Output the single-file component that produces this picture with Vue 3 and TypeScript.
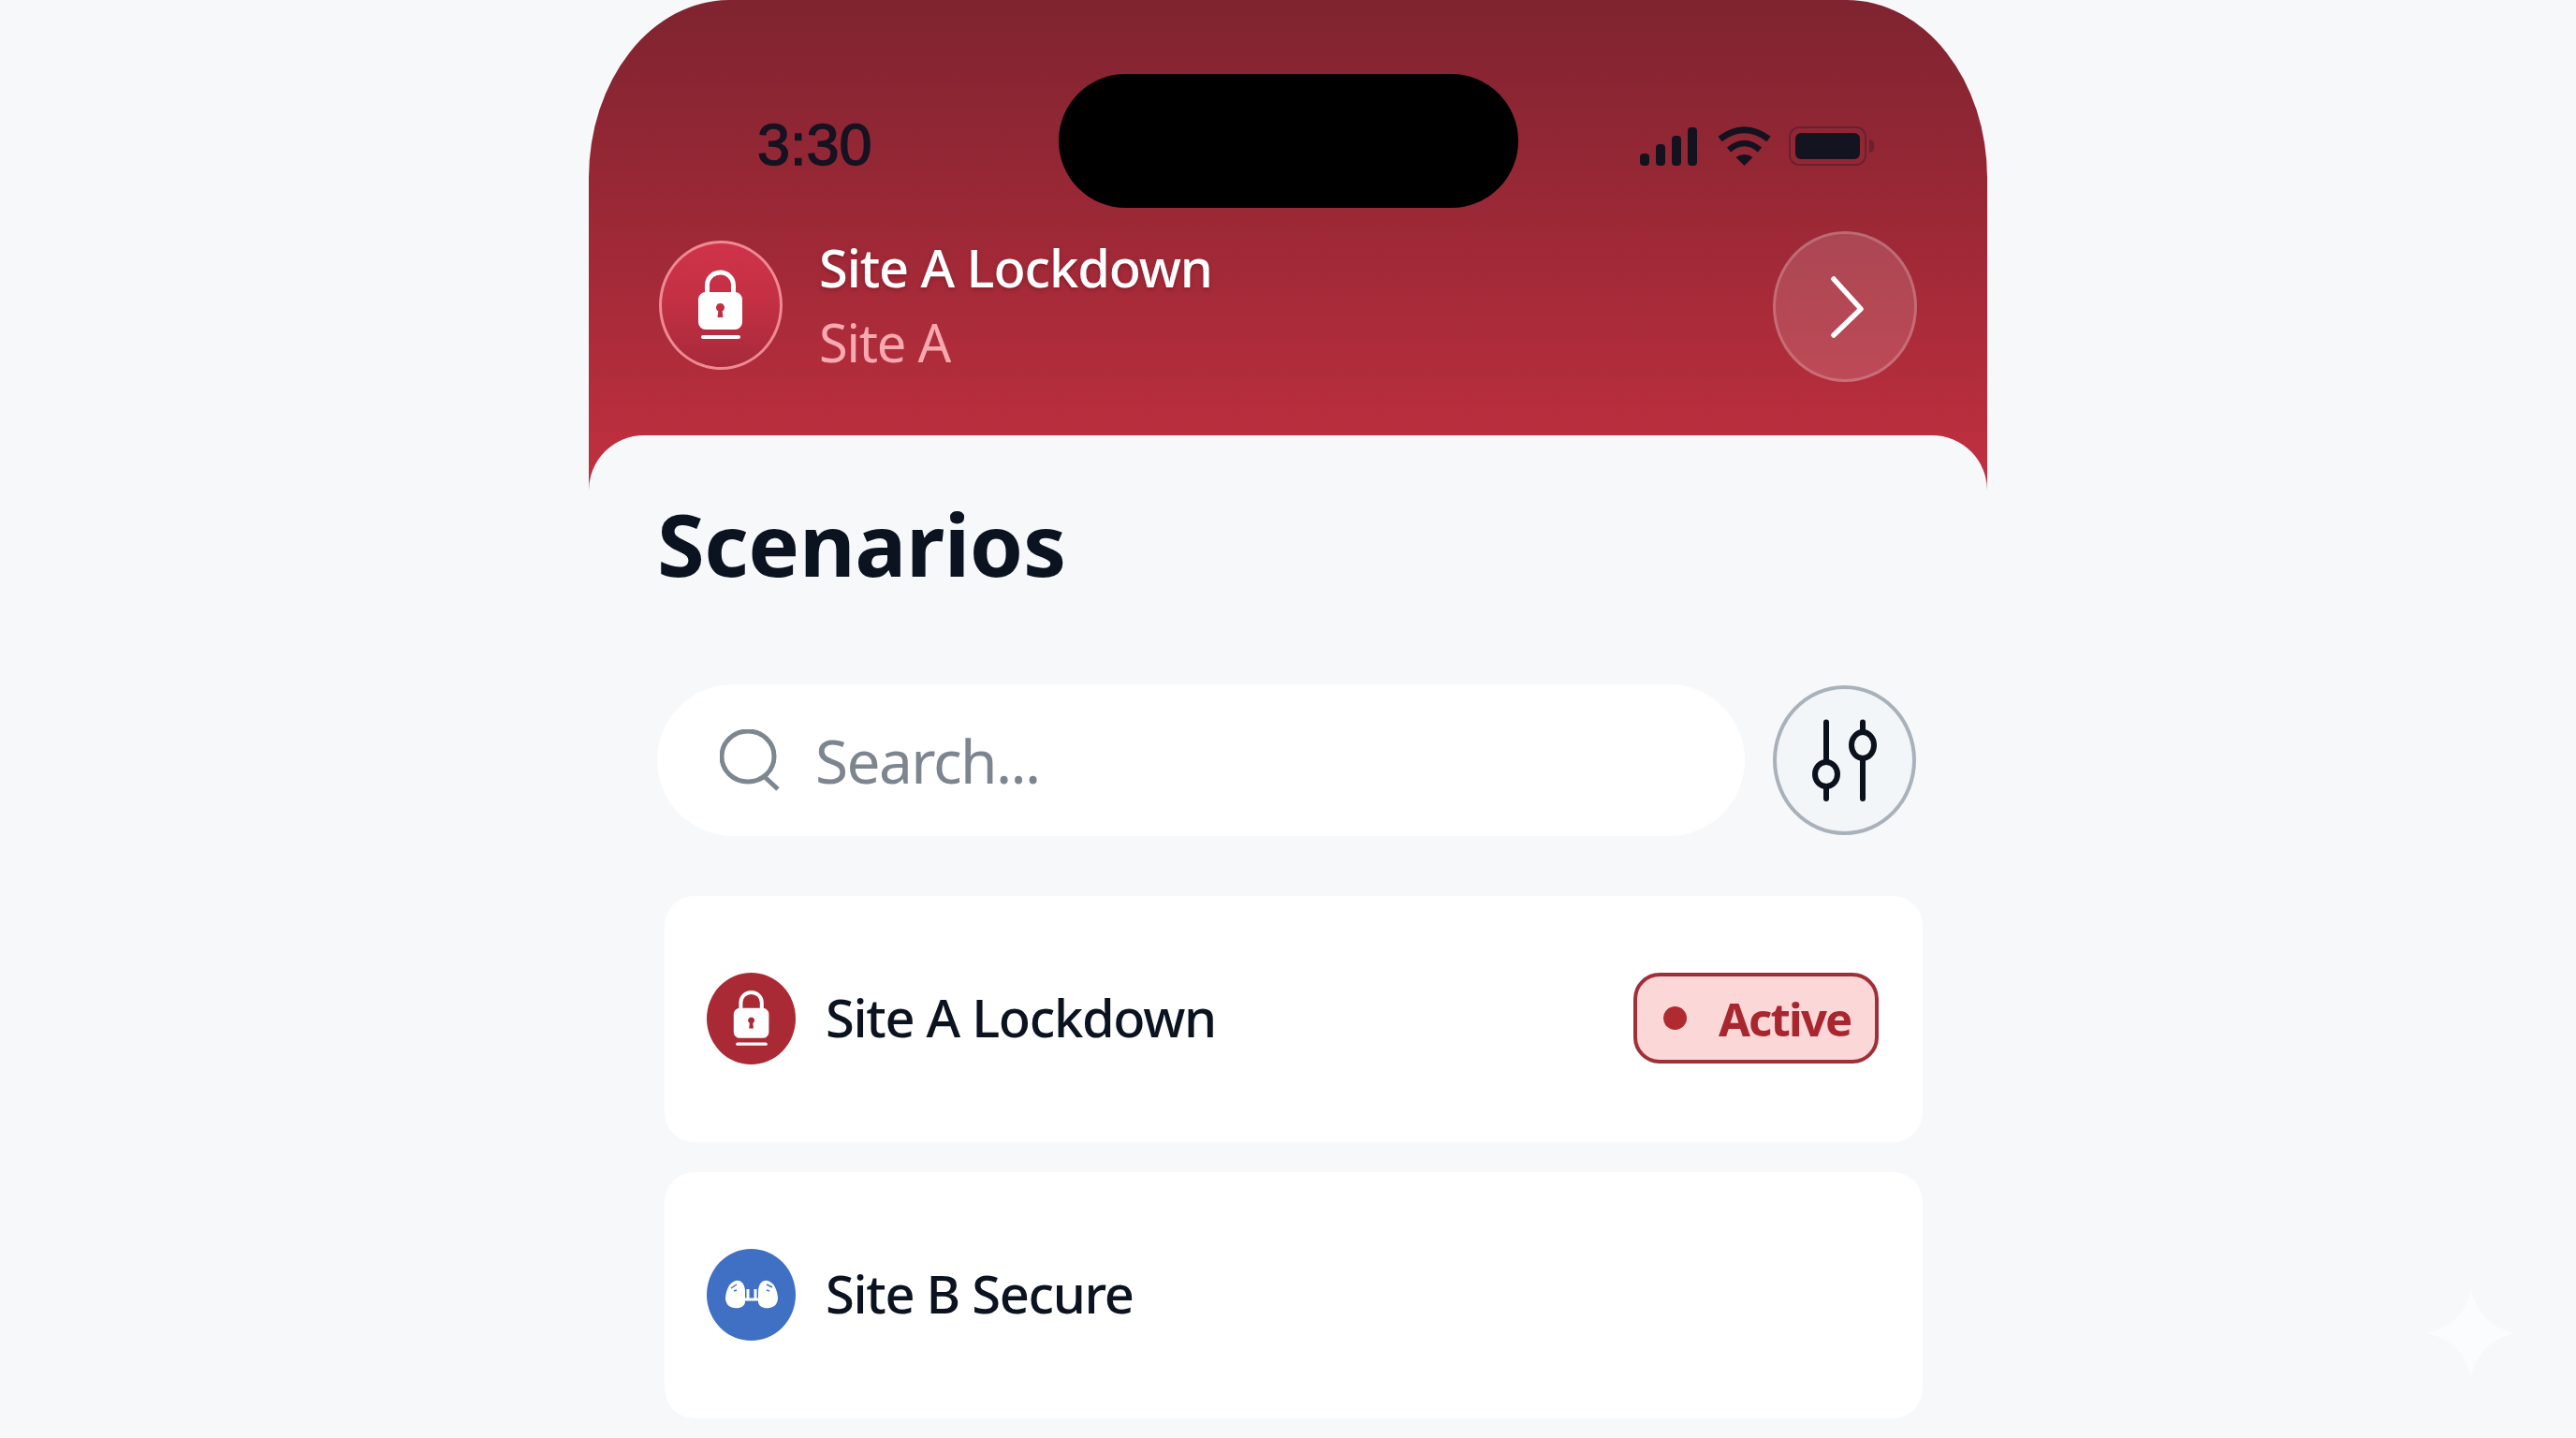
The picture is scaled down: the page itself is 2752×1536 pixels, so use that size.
<script setup lang="ts">
interface Scenario {
  name: string
  icon: 'lock' | 'binoculars'
  active: boolean
}

const scenarios: Scenario[] = [
  { name: 'Site A Lockdown', icon: 'lock', active: true },
  { name: 'Site B Secure', icon: 'binoculars', active: false }
]

const signalBars = [13, 23, 32, 41]
</script>

<template>
  <main class="page">
    <svg class="defs" aria-hidden="true">
      <symbol id="lock" viewBox="0 0 60 80">
        <path d="M15.5 28V18.5a14 13.5 0 0 1 28 0V28" fill="none" stroke="#fff" stroke-width="5" />
        <path
          fill="#fff"
          fill-rule="evenodd"
          d="M14 26h31a8 8 0 0 1 8 8v24a8 8 0 0 1-8 8H14a8 8 0 0 1-8-8V34a8 8 0 0 1 8-8ZM29.5 38a4.5 4.5 0 0 0-2.2 8.4L26.500 53h6l-.8-6.600A4.500 4.500 0 0 0 29.500 38Z"
        />
        <rect x="9" y="72" width="42" height="4" rx="2" fill="#fff" />
      </symbol>
    </svg>

    <div class="phone">
      <header class="hero">
        <div class="status-bar">
          <span class="time">3:30</span>
          <div class="island"></div>
          <div class="status-icons">
            <div class="signal">
              <span v-for="h in signalBars" :key="h" :style="{ height: h + 'px' }"></span>
            </div>
            <svg class="wifi" viewBox="0 0 59 42">
              <path d="M3.500 13.500Q29.500-6 55.500 13.500" fill="none" stroke="#14121f" stroke-width="7" />
              <path d="M13 25Q29.500 11 46 25" fill="none" stroke="#14121f" stroke-width="6.500" />
              <path d="M20.500 33Q29.500 27 38.500 33L29.500 42Z" fill="#14121f" />
            </svg>
            <div class="battery"><span></span></div>
            <div class="battery-nub"></div>
          </div>
        </div>

        <div class="alert-row">
          <div class="alert-icon">
            <svg class="lock-lg"><use href="#lock" /></svg>
          </div>
          <div class="alert-text">
            <div class="alert-title">Site A Lockdown</div>
            <div class="alert-sub">Site A</div>
          </div>
          <button class="alert-go" type="button">
            <svg viewBox="0 0 36 66">
              <path d="M3 3 32 35 3 63" fill="none" stroke="#fff" stroke-width="5.500" stroke-linecap="round" stroke-linejoin="round" />
            </svg>
          </button>
        </div>
      </header>

      <section class="sheet">
        <h1 class="title">Scenarios</h1>

        <div class="tools">
          <div class="search">
            <svg class="search-icon" viewBox="0 0 64 66">
              <ellipse cx="30" cy="29" rx="28" ry="27" fill="none" stroke="#7d8790" stroke-width="5" />
              <path d="M47 50 62 64" fill="none" stroke="#7d8790" stroke-width="5" />
            </svg>
            <span class="search-text">Search...</span>
          </div>
          <button class="filter" type="button">
            <svg viewBox="0 0 72 92">
              <g fill="none" stroke="#0b121d" stroke-width="6" stroke-linecap="round">
                <path d="M16 5.500V47M16 75V87" />
                <path d="M55 5.500V16M55 44V87" />
                <ellipse cx="16" cy="61" rx="12" ry="13" />
                <ellipse cx="55" cy="30" rx="12" ry="14" />
              </g>
            </svg>
          </button>
        </div>

        <ul class="cards">
          <li v-for="s in scenarios" :key="s.name" class="card">
            <div class="card-icon" :class="s.icon">
              <svg v-if="s.icon === 'lock'" class="lock-sm"><use href="#lock" /></svg>
              <svg v-else class="binoculars" viewBox="0 0 56 31">
                <path fill="#fff" d="M11 1C17 0 21 5 21 13V24C20 29 15 31 9 30 3 29 0 25 0 19 1 10 4 3 11 1Z" />
                <path fill="#fff" d="M45 1C39 0 35 5 35 13V24C36 29 41 31 47 30 53 29 56 25 56 19 55 10 52 3 45 1Z" />
                <path fill="none" stroke="#fff" stroke-width="3" d="M20 21H36M24 10V21M32 10V21" />
                <path fill="none" stroke="#3f70c4" stroke-width="1.500" d="M6 9 12 5M9 12 12 11M44 5 50 8M44 11 47 12" />
              </svg>
            </div>
            <span class="card-name">{{ s.name }}</span>
            <span v-if="s.active" class="badge"><i class="badge-dot"></i>Active</span>
          </li>
        </ul>
      </section>
    </div>

    <svg class="sparkle" viewBox="0 0 96 96">
      <path d="M48 0C53 26 70 43 96 48 70 53 53 70 48 96 43 70 26 53 0 48 26 43 43 26 48 0Z" fill="#fbfcfd" />
    </svg>
  </main>
</template>

<style scoped>
.page {
  position: relative;
  height: 1536px;
  overflow: hidden;
  background: #f6f8fa;
  font-family: "Noto Sans", "Open Sans", sans-serif;
}

.defs {
  position: absolute;
  width: 0;
  height: 0;
}

.phone {
  width: 1494px;
  margin: 0 auto;
}

/* red top part */
.hero {
  height: 524px;
  box-sizing: border-box;
  padding-top: 79px;
  border-radius: 150px 150px 0 0 / 190px 190px 0 0;
  background: linear-gradient(180deg, #7f2430 0%, #9c2836 45%, #c23040 100%);
}

.status-bar {
  display: grid;
  grid-template-columns: 1fr 491px 1fr;
  align-items: center;
}

.time {
  padding-left: 180px;
  padding-top: 6px;
  font-family: "Liberation Sans", sans-serif;
  font-size: 63px;
  font-weight: 400;
  color: #171222;
  -webkit-text-stroke: 1.5px #171222;
}

.island {
  height: 143px;
  border-radius: 72px;
  background: #000;
}

.status-icons {
  display: flex;
  align-items: center;
  height: 42px;
  padding: 10px 0 0 130px;
}

.signal {
  display: flex;
  align-items: flex-end;
  gap: 7px;
  width: 62px;
  height: 42px;
}

.signal span {
  width: 10px;
  border-radius: 4px;
  background: #14121f;
}

.wifi {
  width: 59px;
  height: 42px;
  margin-left: 20px;
}

.battery {
  box-sizing: border-box;
  width: 83px;
  height: 42px;
  margin-left: 18px;
  padding: 5px;
  border: 2px solid #6b2030;
  border-radius: 11px;
}

.battery span {
  display: block;
  height: 100%;
  border-radius: 6px;
  background: #131420;
}

.battery-nub {
  width: 5px;
  height: 14px;
  margin-left: 3px;
  border-radius: 0 5px 5px 0;
  background: #6b2030;
}

.alert-row {
  display: flex;
  align-items: center;
  height: 161px;
  margin-top: 25px;
  padding: 0 75px;
}

.alert-icon {
  display: flex;
  flex: none;
  align-items: center;
  justify-content: center;
  box-sizing: border-box;
  width: 132px;
  height: 138px;
  margin-bottom: 3px;
  border: 3px solid #ee8a92;
  border-radius: 50%;
  background: linear-gradient(180deg, #cf3349 0%, #c43044 45%, #a72a3a 100%);
}

.lock-lg {
  width: 60px;
  height: 80px;
}

.alert-text {
  flex: 1;
  margin-left: 39px;
  padding-bottom: 6px;
}

.alert-title {
  font-size: 56px;
  font-weight: 500;
  line-height: 80px;
  letter-spacing: -1.1px;
  color: #fff;
  text-shadow: 0 2px 4px rgba(80, 10, 20, 0.35);
}

.alert-sub {
  font-size: 56px;
  line-height: 80px;
  letter-spacing: -1.2px;
  color: #f8a9b0;
}

.alert-go {
  display: flex;
  flex: none;
  align-items: center;
  justify-content: center;
  box-sizing: border-box;
  width: 154px;
  height: 161px;
  padding: 0 0 0 6px;
  border: 3px solid rgba(255, 255, 255, 0.2);
  border-radius: 50%;
  background: rgba(255, 255, 255, 0.14);
}

.alert-go svg {
  width: 36px;
  height: 66px;
}

/* light sheet over the red */
.sheet {
  position: relative;
  margin-top: -59px;
  padding: 0 76px 0 73px;
  border-radius: 59px 59px 0 0;
  background: #f6f8fa;
}

.title {
  margin: 0;
  padding-top: 56px;
  font-size: 92px;
  line-height: 120px;
  font-weight: 700;
  letter-spacing: -0.4px;
  color: #0b1320;
}

.tools {
  display: flex;
  gap: 30px;
  margin-top: 90px;
}

.search {
  display: flex;
  flex: 1;
  align-items: center;
  height: 162px;
  padding-left: 67px;
  border-radius: 81px;
  background: #fff;
}

.search-icon {
  width: 64px;
  height: 66px;
}

.search-text {
  margin-left: 38px;
  font-size: 64px;
  letter-spacing: -1.6px;
  color: #7c8590;
}

.filter {
  display: flex;
  flex: none;
  align-items: center;
  justify-content: center;
  box-sizing: border-box;
  width: 153px;
  height: 160px;
  margin-top: 1px;
  padding: 0;
  border: 4px solid #a9b2ba;
  border-radius: 50%;
  background: #f3f6f8;
}

.filter svg {
  width: 72px;
  height: 92px;
}

.cards {
  display: flex;
  flex-direction: column;
  gap: 32px;
  margin: 64px -7px 0 8px;
  padding: 0;
  list-style: none;
}

.card {
  display: flex;
  align-items: center;
  height: 263px;
  padding: 0 47px 0 45px;
  border-radius: 32px;
  background: #fff;
}

.card-icon {
  display: flex;
  flex: none;
  align-items: center;
  justify-content: center;
  width: 95px;
  height: 98px;
  margin-bottom: 2px;
  border-radius: 50%;
}

.card-icon.lock {
  background: #a92a35;
}

.card-icon.binoculars {
  background: #3f70c4;
}

.lock-sm {
  width: 48px;
  height: 64px;
}

svg.binoculars {
  width: 56px;
  height: 31px;
}

.card-name {
  flex: 1;
  margin-left: 32px;
  padding-bottom: 6px;
  font-size: 56px;
  font-weight: 500;
  letter-spacing: -1.3px;
  color: #0b1320;
}

.badge {
  display: flex;
  align-items: center;
  box-sizing: border-box;
  width: 262px;
  height: 97px;
  margin-bottom: 2px;
  padding-left: 28px;
  border: 4px solid #a03038;
  border-radius: 28px;
  background: #fbd7d8;
  font-size: 49px;
  font-weight: 700;
  letter-spacing: -1.8px;
  color: #a8262e;
}

.badge-dot {
  flex: none;
  width: 25px;
  height: 25px;
  margin-right: 34px;
  border-radius: 50%;
  background: #b02a32;
}

.sparkle {
  position: absolute;
  left: 2592px;
  top: 1376px;
  width: 96px;
  height: 96px;
}
</style>

<style>
html,
body {
  margin: 0;
  background: #f6f8fa;
}
</style>
